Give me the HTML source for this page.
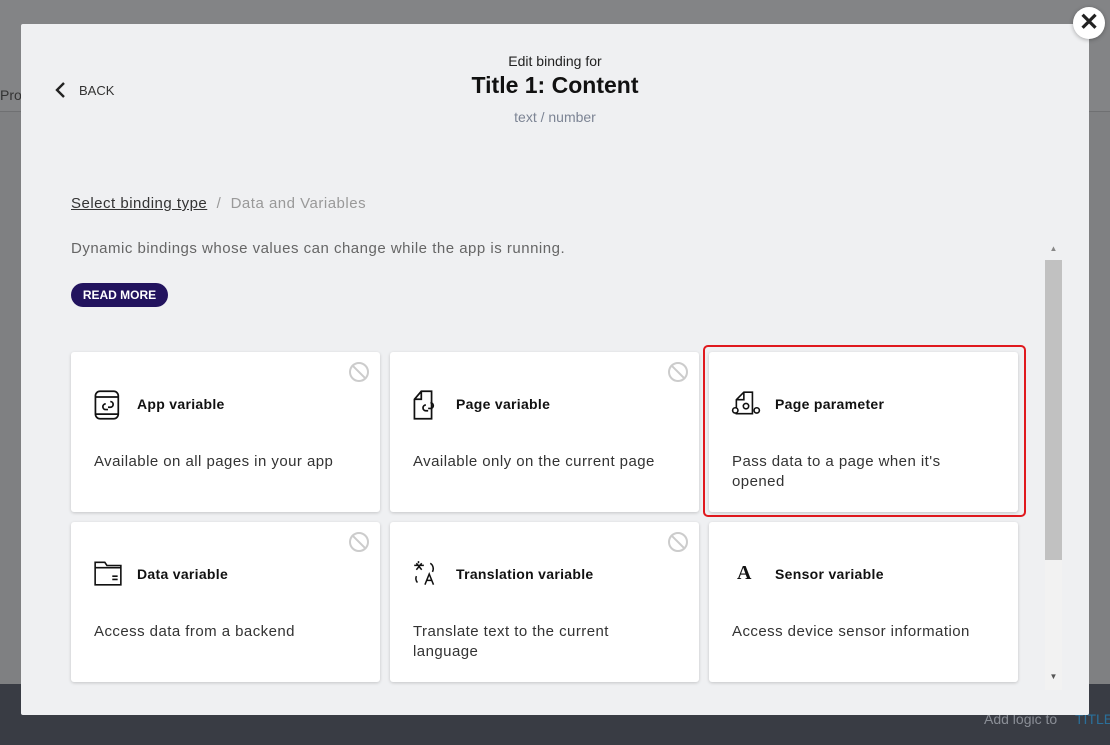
<!DOCTYPE html>
<html><head><meta charset="utf-8"><style>
*{box-sizing:border-box;margin:0;padding:0}
body{width:1110px;height:745px;overflow:hidden;background:#7f8082;font-family:"Liberation Sans",sans-serif;position:relative}
.topbar{position:absolute;left:0;top:0;width:1110px;height:112px;background:#838486;border-bottom:1px solid #6f7072}
.bottom{position:absolute;left:0;top:684px;width:1110px;height:61px;background:#393c44}
.modal{position:absolute;left:21px;top:24px;width:1068px;height:691px;background:#eff0f2;border-radius:2px}
.close{position:absolute;left:1073px;top:7px;width:32px;height:32px;border-radius:50%;background:#fff;box-shadow:0 1px 4px rgba(0,0,0,.3);text-align:center;font:bold 24px/32px "Liberation Sans";color:#222}
.card{position:absolute;width:309px;height:160px;background:#fff;border-radius:3px;box-shadow:0 1px 3px rgba(0,0,0,.18)}
.card .t{position:absolute;left:66px;top:44px;font-weight:bold;font-size:14px;color:#111;letter-spacing:0.3px}
.card .d{position:absolute;left:23px;top:100px;font-size:15px;line-height:20px;color:#333;width:245px;letter-spacing:0.45px}
.card svg.ic{position:absolute;left:22px;top:37px}
.ban{position:absolute;right:11px;top:10px;width:20px;height:20px;border:2px solid #ccc;border-radius:50%}
.ban:after{content:"";position:absolute;left:7px;top:-2px;width:2px;height:20px;background:#ccc;transform:rotate(-45deg)}
.sp{letter-spacing:0.5px}
</style></head><body>
<div class="topbar"><span style="position:absolute;left:0;top:87px;font-size:14px;color:#333">Pro</span></div>
<div class="bottom"><span style="position:absolute;left:984px;top:27px;font-size:14px;color:#8a8e96">Add logic to</span><span style="position:absolute;left:1075px;top:27px;font-size:14px;color:#2a6f9a">TITLE</span></div>
<div class="modal">
<div style="position:absolute;left:34px;top:58px;font-size:13px;color:#333"><svg width="12" height="16" style="vertical-align:-3px;margin-right:12px"><path d="M9 1L2 8l7 7" stroke="#222" stroke-width="2.4" fill="none"/></svg>BACK</div>
<div style="position:absolute;left:0;width:1068px;top:29px;text-align:center;font-size:14px;color:#222">Edit binding for</div>
<div style="position:absolute;left:0;width:1068px;top:48px;text-align:center;font-size:23px;font-weight:bold;color:#111">Title 1: Content</div>
<div style="position:absolute;left:0;width:1068px;top:85px;text-align:center;font-size:14px;color:#7c8494">text / number</div>
<div class="sp" style="position:absolute;left:50px;top:171px;font-size:15px;color:#999"><span style="color:#333;text-decoration:underline">Select binding type</span>&nbsp; / &nbsp;Data and Variables</div>
<div class="sp" style="position:absolute;left:50px;top:216px;font-size:15px;color:#666">Dynamic bindings whose values can change while the app is running.</div>
<div style="position:absolute;left:50px;top:259px;width:97px;height:24px;border-radius:12px;background:#22135e;color:#fff;font-size:12px;font-weight:bold;text-align:center;line-height:24px">READ MORE</div>
<div style="position:absolute;left:1024px;top:236px;width:17px;height:430px;background:#f2f2f2"></div>
<div style="position:absolute;left:1024px;top:236px;width:17px;height:300px;background:#c1c1c1"></div>
<div style="position:absolute;left:1024px;top:220px;width:17px;text-align:center;font-size:8px;color:#888">▲</div>
<div style="position:absolute;left:1024px;top:648px;width:17px;text-align:center;font-size:8px;color:#555">▼</div>
</div>
<div class="close">✕</div>
<div style="position:absolute;left:703px;top:345px;width:323px;height:172px;border:2px solid #e0191e;border-radius:5px"></div>
<div class="card" style="left:71px;top:352px"><div class="ban"></div><svg class="ic" width="30" height="32" viewBox="0 0 26 28" fill="none" stroke="#111" stroke-width="1.5"><rect x="2" y="2" width="20" height="24" rx="4"/><path d="M2 7h20M2 22h20"/><path d="M11 13a2.5 2.5 0 100 5h2M15 11a2.5 2.5 0 110 5h-2"/></svg><div class="t">App variable</div><div class="d">Available on all pages in your app</div></div>
<div class="card" style="left:390px;top:352px"><div class="ban"></div><svg class="ic" width="30" height="32" viewBox="0 0 26 28" fill="none" stroke="#111" stroke-width="1.5"><path d="M8 2h9v24H2V9z M8 2v7H2"/><path d="M12 14a2.5 2.5 0 100 5h2M16 12a2.5 2.5 0 110 5h-2"/></svg><div class="t">Page variable</div><div class="d">Available only on the current page</div></div>
<div class="card" style="left:709px;top:352px"><svg class="ic" width="30" height="30" viewBox="0 0 28 28" fill="none" stroke="#111" stroke-width="1.5"><path d="M12 3h8v20H5V10z M12 3v7H5"/><circle cx="4" cy="20" r="2.5" fill="#fff"/><circle cx="14" cy="16" r="2.5" fill="#fff"/><circle cx="24" cy="20" r="2.5" fill="#fff"/></svg><div class="t">Page parameter</div><div class="d">Pass data to a page when it's opened</div></div>
<div class="card" style="left:71px;top:522px"><div class="ban"></div><svg class="ic" width="30" height="28" viewBox="0 0 28 26" fill="none" stroke="#111" stroke-width="1.5"><path d="M2 3h9l2 3h13v18H2z M2 8h24"/><path d="M18 16h5M18 19h5"/></svg><div class="t">Data variable</div><div class="d">Access data from a backend</div></div>
<div class="card" style="left:390px;top:522px"><div class="ban"></div><svg class="ic" width="28" height="30" viewBox="0 0 26 28" fill="none" stroke="#111" stroke-width="1.4"><path d="M4 4l5 6M9 4L4 10M2 6h9M6 2v2"/><path d="M17 4a6 6 0 012 8M4 16a6 6 0 001 6"/><path d="M12 24l4-10 4 10M13.5 20h5"/></svg><div class="t">Translation variable</div><div class="d">Translate text to the current language</div></div>
<div class="card" style="left:709px;top:522px"><div style="position:absolute;left:28px;top:40px;font:bold 20px 'Liberation Serif',serif;color:#111">A</div><div class="t">Sensor variable</div><div class="d">Access device sensor information</div></div>
</body></html>
